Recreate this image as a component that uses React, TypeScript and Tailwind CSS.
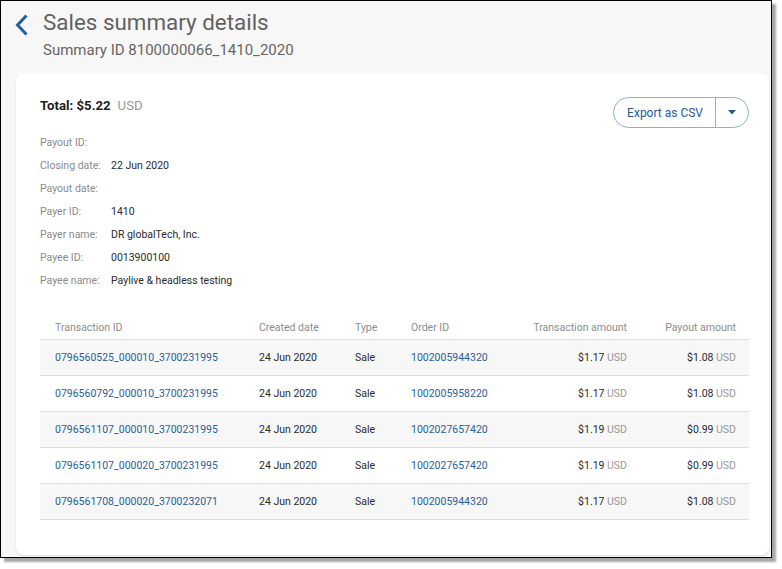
import React from "react";

const rows = [
  { id: "0796560525_000010_3700231995", date: "24 Jun 2020", type: "Sale", order: "1002005944320", amt: "$1.17", pay: "$1.08" },
  { id: "0796560792_000010_3700231995", date: "24 Jun 2020", type: "Sale", order: "1002005958220", amt: "$1.17", pay: "$1.08" },
  { id: "0796561107_000010_3700231995", date: "24 Jun 2020", type: "Sale", order: "1002027657420", amt: "$1.19", pay: "$0.99" },
  { id: "0796561107_000020_3700231995", date: "24 Jun 2020", type: "Sale", order: "1002027657420", amt: "$1.19", pay: "$0.99" },
  { id: "0796561708_000020_3700232071", date: "24 Jun 2020", type: "Sale", order: "1002005944320", amt: "$1.17", pay: "$1.08" },
];

const details: [string, string][] = [
  ["Payout ID:", ""],
  ["Closing date:", "22 Jun 2020"],
  ["Payout date:", ""],
  ["Payer ID:", "1410"],
  ["Payer name:", "DR globalTech, Inc."],
  ["Payee ID:", "0013900100"],
  ["Payee name:", "Paylive & headless testing"],
];

const cols = "grid grid-cols-[219px_96px_56px_109px_107px_1fr] whitespace-nowrap";

export default function App() {
  return (
    <div className="w-[782px] h-[569px] bg-white font-['Roboto',sans-serif]">
      <div className="w-[772px] h-[558px] border border-black shadow-[4px_4px_2px_rgba(0,0,0,0.35)] bg-[#f7f7f7] flex flex-col">
        {/* Header */}
        <div className="flex items-start pl-[13px] pt-[11px] h-[72px]">
          <svg width="16" height="24" viewBox="0 0 16 24" className="mt-[1px]">
            <polyline points="12.5,2.5 3.5,12 12.5,21.5" fill="none" stroke="#1f5f9f" strokeWidth="3" />
          </svg>
          <div className="ml-[13px]">
            <h1 className="text-[22.4px] leading-[22px] text-[#626262] mt-[-1px]">Sales summary details</h1>
            <div className="text-[15px] leading-[18px] text-[#666] mt-[8px]">Summary ID 8100000066_1410_2020</div>
          </div>
        </div>

        {/* Card */}
        <div className="ml-[15px] mr-[2px] h-[482px] bg-white rounded-[8px] shadow-[0_1px_2px_rgba(0,0,0,0.12)] pl-[24px] pr-[20px] pt-[23px]">
          <div className="flex justify-between">
            <div>
              <div className="h-[20px] flex items-center text-[13.2px]">
                <span className="font-bold text-[#222]">Total: $5.22</span>
                <span className="ml-[7px] text-[#999]">USD</span>
              </div>
              <div className="mt-[15px] text-[10.5px]">
                {details.map(([k, v]) => (
                  <div key={k} className="h-[23px] flex items-center whitespace-nowrap">
                    <span className="w-[71px] text-[#8a8a8a]">{k}</span>
                    <span className="text-[#2b2b2b]">{v}</span>
                  </div>
                ))}
              </div>
            </div>
            <div className="mt-[1px] h-[31px] flex rounded-full border border-[#8fb0d0] text-[#235a94] text-[12px]">
              <div className="pl-[13px] pr-[12px] flex items-center border-r border-[#8fb0d0]">Export as CSV</div>
              <div className="w-[32px] flex items-center justify-center">
                <svg width="8" height="5" viewBox="0 0 8 5">
                  <polygon points="0,0 8,0 4,4.5" fill="#235a94" />
                </svg>
              </div>
            </div>
          </div>

          {/* Table */}
          <div className="mt-[24px] text-[10.5px]">
            <div className={`${cols} h-[24px] items-center text-[#8c8c8c] border-b border-[#dedede]`}>
              <div className="pl-[15px]">Transaction ID</div>
              <div>Created date</div>
              <div>Type</div>
              <div>Order ID</div>
              <div className="text-right">Transaction amount</div>
              <div className="text-right pr-[13px]">Payout amount</div>
            </div>
            {rows.map((r, i) => (
              <div
                key={i}
                className={`${cols} h-[36px] items-center border-b border-[#dedede] ${i % 2 === 0 ? "bg-[#f7f7f7]" : "bg-white"}`}
              >
                <div className="pl-[15px] text-[#2a5e98]">{r.id}</div>
                <div className="text-[#2b2b2b]">{r.date}</div>
                <div className="text-[#2b2b2b]">{r.type}</div>
                <div className="text-[#2a5e98]">{r.order}</div>
                <div className="text-right text-[#2b2b2b]">
                  {r.amt} <span className="text-[#999]">USD</span>
                </div>
                <div className="text-right pr-[13px] text-[#2b2b2b]">
                  {r.pay} <span className="text-[#999]">USD</span>
                </div>
              </div>
            ))}
          </div>
        </div>
      </div>
    </div>
  );
}
